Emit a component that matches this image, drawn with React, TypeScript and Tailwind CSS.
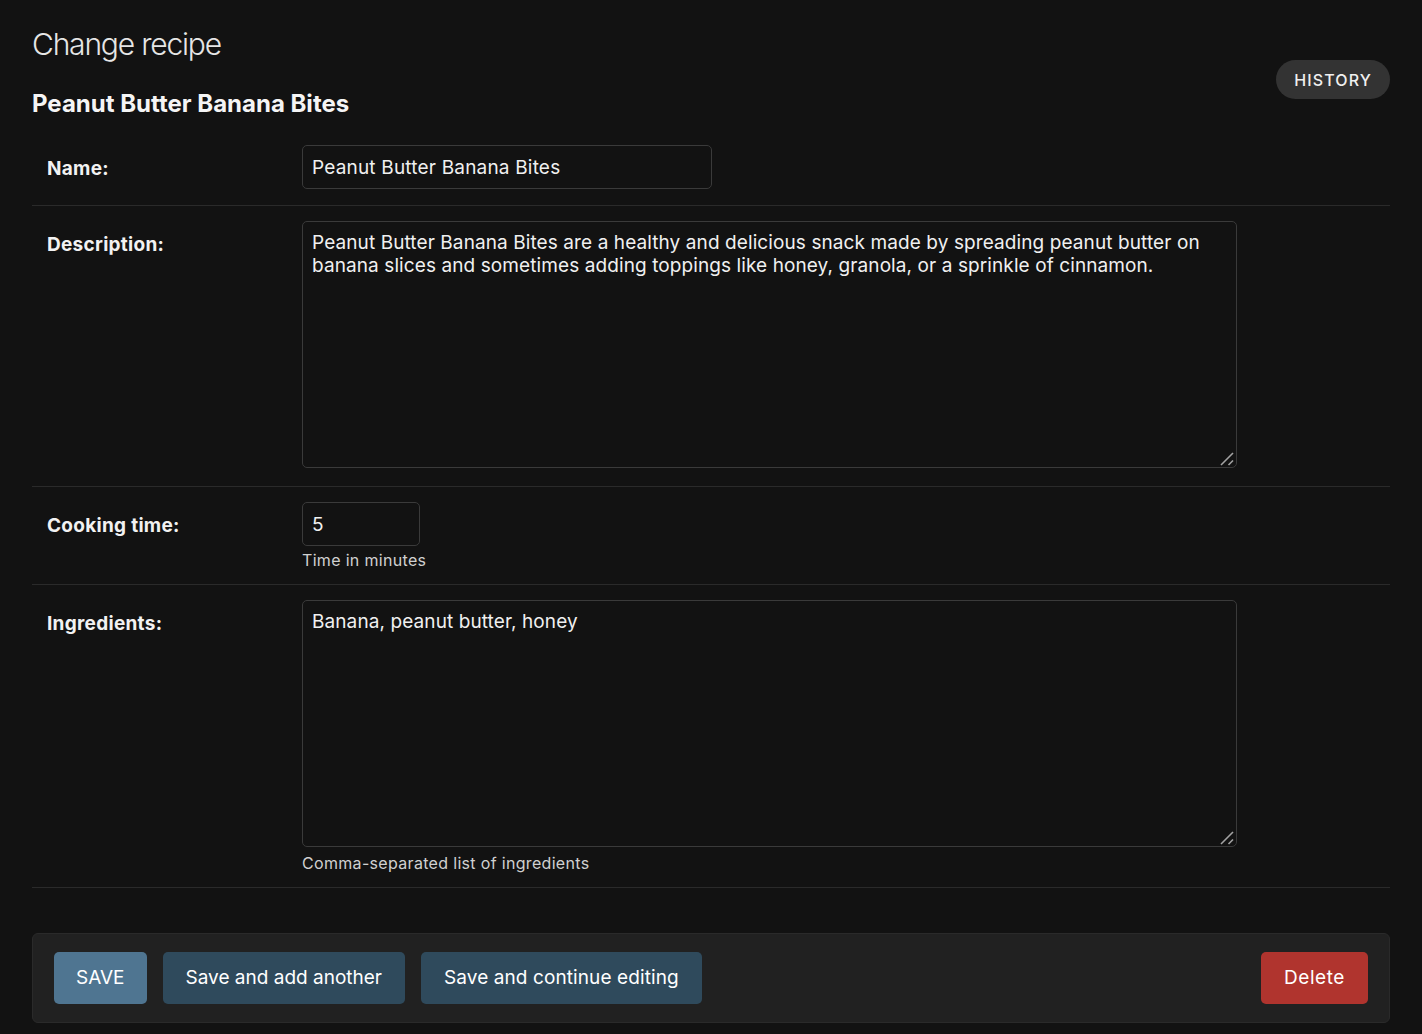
import React from 'react';

// Django admin style "change" form, dark theme

const FONT = { fontFamily: 'Inter, "Noto Sans", "Liberation Sans", sans-serif' };

function FormRow({
  label,
  children,
  className = '',
}: {
  label: string;
  children: React.ReactNode;
  className?: string;
}) {
  return (
    <div className={`flex border-b border-[#2a2a2a] pt-[15px] ${className}`}>
      <label className="w-[270px] shrink-0 pl-[15px] pt-[13px] text-[19px] leading-[22px] font-bold tracking-[0.015em] text-[#f2f2f2]">
        {label}
      </label>
      <div className="flex-1">{children}</div>
    </div>
  );
}

// textarea with the little diagonal resize grip drawn over its corner
function TextArea({ value }: { value: string }) {
  return (
    <div className="relative w-fit">
      <textarea
        defaultValue={value}
        className="block h-[247px] w-[935px] resize-none rounded-[5px] border border-[#3a3a3a] bg-[#121212] px-[9px] py-[9px] text-[19px] leading-[23px] tracking-[0.005em] text-[#f0f0f0] outline-none [color-scheme:dark]"
      />
      <svg
        className="pointer-events-none absolute right-[2px] bottom-[1px]"
        width="16"
        height="16"
        viewBox="0 0 16 16"
      >
        <line x1="2" y1="14" x2="14" y2="2" stroke="#a3a3a3" strokeWidth="1.6" />
        <line x1="9.5" y1="14" x2="14" y2="9.5" stroke="#a3a3a3" strokeWidth="1.6" />
      </svg>
    </div>
  );
}

export default function App() {
  const inputCls =
    'block rounded-[5px] border border-[#3a3a3a] bg-[#121212] px-[9px] text-[19px] tracking-[0.01em] text-[#f0f0f0] outline-none [color-scheme:dark]';

  return (
    <div className="min-h-[1034px] bg-[#121212] px-[32px] pt-[26px] text-[#eeeeee]" style={FONT}>
      {/* Header */}
      <div className="flex items-start justify-between">
        <div>
          <h1 className="text-[30px] leading-[36px] font-light tracking-[-0.04em] text-[#e6e6e6]">
            Change recipe
          </h1>
          <h2 className="mt-[28px] text-[24px] leading-[28px] font-bold text-[#f5f5f5]">
            Peanut Butter Banana Bites
          </h2>
        </div>
        <button className="mt-[34px] h-[39px] rounded-full bg-[#333333] px-[18px] text-[16px] font-medium tracking-[0.07em] text-[#f0f0f0]">
          HISTORY
        </button>
      </div>

      {/* Fields */}
      <div className="mt-[12px]">
        <FormRow label="Name:" className="pb-[16px]">
          <input
            defaultValue="Peanut Butter Banana Bites"
            className={`${inputCls} h-[44px] w-[410px]`}
          />
        </FormRow>

        <FormRow label="Description:" className="pb-[18px]">
          <TextArea value="Peanut Butter Banana Bites are a healthy and delicious snack made by spreading peanut butter on banana slices and sometimes adding toppings like honey, granola, or a sprinkle of cinnamon." />
        </FormRow>

        <FormRow label="Cooking time:" className="pb-[14px]">
          <input defaultValue="5" className={`${inputCls} h-[44px] w-[118px]`} />
          <div className="mt-[4px] text-[16px] leading-[20px] tracking-[0.02em] text-[#d0d0d0]">
            Time in minutes
          </div>
        </FormRow>

        <FormRow label="Ingredients:" className="pb-[14px]">
          <TextArea value="Banana, peanut butter, honey" />
          <div className="mt-[6px] text-[16px] leading-[20px] tracking-[0.02em] text-[#d0d0d0]">
            Comma-separated list of ingredients
          </div>
        </FormRow>
      </div>

      {/* Submit row */}
      <div className="mt-[45px] flex items-center gap-[16px] rounded-[6px] border border-[#2a2a2a] bg-[#212121] px-[21px] py-[18px]">
        <button className="h-[52px] rounded-[5px] bg-[#4f7591] px-[22px] text-[19px] text-white">SAVE</button>
        <button className="h-[52px] rounded-[5px] bg-[#2f4a5c] px-[23px] text-[19px] text-white">
          Save and add another
        </button>
        <button className="h-[52px] rounded-[5px] bg-[#2f4a5c] px-[23px] text-[19px] tracking-[0.005em] text-white">
          Save and continue editing
        </button>
        <button className="ml-auto h-[52px] rounded-[5px] bg-[#b0342e] px-[23px] text-[19px] tracking-[0.03em] text-white">
          Delete
        </button>
      </div>
    </div>
  );
}
